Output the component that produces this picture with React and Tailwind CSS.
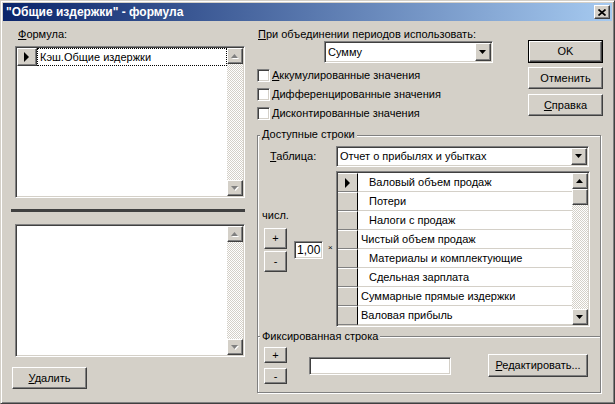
import React from "react";

const RAISED =
  "bg-[#d4d0c8] border border-t-white border-l-white border-r-[#404040] border-b-[#404040] shadow-[inset_-1px_-1px_#808080]";
const SUNKEN =
  "border border-t-[#808080] border-l-[#808080] border-r-white border-b-white shadow-[inset_1px_1px_#404040,inset_-1px_-1px_#d4d0c8]";
const CHECKER =
  "bg-[image:repeating-conic-gradient(#d4d0c8_0%_25%,#ffffff_0%_50%)] bg-[length:2px_2px]";

function Btn({ className = "", children }) {
  return (
    <div className={`flex items-center justify-center shrink-0 ${RAISED} ${className}`}>
      {children}
    </div>
  );
}

function Tri({ dir = "up", disabled = false }) {
  const pts = dir === "up" ? "3.5,0 7,4 0,4" : "0,0 7,0 3.5,4";
  return (
    <svg width="8" height="5" viewBox="0 0 8 5">
      {disabled && <polygon points={pts} fill="#ffffff" transform="translate(1,1)" />}
      <polygon points={pts} fill={disabled ? "#808080" : "#000000"} />
    </svg>
  );
}

function RightTri() {
  return (
    <svg width="6" height="10" viewBox="0 0 6 10">
      <polygon points="0,0 5,5 0,10" fill="#000" />
    </svg>
  );
}

function VScroll({ disabled = false, thumb = false }) {
  return (
    <div className="flex flex-col w-[16px] h-full shrink-0">
      <Btn className="w-[16px] h-[16px]">
        <Tri dir="up" disabled={disabled} />
      </Btn>
      {thumb && <Btn className="w-[16px] h-[16px]" />}
      <div className={`flex-1 ${CHECKER}`} />
      <Btn className="w-[16px] h-[16px]">
        <Tri dir="down" disabled={disabled} />
      </Btn>
    </div>
  );
}

function Combo({ className = "", text }) {
  return (
    <div className={`flex bg-white p-px ${SUNKEN} ${className}`}>
      <div className="flex-1 flex items-center pl-[2px]">{text}</div>
      <Btn className="w-[16px] h-full">
        <Tri dir="down" />
      </Btn>
    </div>
  );
}

function Check({ children }) {
  return (
    <div className="h-[19px] flex items-center">
      <div className={`w-[13px] h-[13px] bg-white ${SUNKEN}`} />
      <div className="ml-[2px]">{children}</div>
    </div>
  );
}

const ROWS = [
  { t: "Валовый объем продаж", ind: true, sel: true },
  { t: "Потери", ind: true },
  { t: "Налоги с продаж", ind: true },
  { t: "Чистый объем продаж" },
  { t: "Материалы и комплектующие", ind: true },
  { t: "Сдельная зарплата", ind: true },
  { t: "Суммарные прямые издержки" },
  { t: "Валовая прибыль" },
];

export default function App() {
  return (
    <div className="w-[615px] h-[404px] bg-[#d4d0c8] border border-t-[#d4d0c8] border-l-[#d4d0c8] border-r-[#404040] border-b-[#404040] shadow-[inset_1px_1px_white,inset_-1px_-1px_#808080] p-[2px] flex flex-col overflow-hidden text-[11px] leading-[13px] text-black font-['Liberation_Sans',Arial,sans-serif]">
      {/* Title bar */}
      <div className="h-[18px] shrink-0 flex items-center justify-between pl-[3px] pr-[2px] bg-[linear-gradient(to_right,#0a246a,#a6caf0)]">
        <div className="text-white font-bold text-[12px] leading-[14px]">
          {'"Общие издержки" - формула'}
        </div>
        <Btn className="w-[16px] h-[14px]">
          <svg width="8" height="7" viewBox="0 0 8 7">
            <path d="M0.5 0.5 L7.5 6.5 M7.5 0.5 L0.5 6.5" stroke="#000" strokeWidth="1.7" />
          </svg>
        </Btn>
      </div>

      <div className="flex flex-1">
        {/* Left column */}
        <div className="ml-[8px] w-[234px] flex flex-col">
          <div className="mt-[7px] pl-[7px] h-[13px]">
            <span className="underline">Ф</span>ормула:
          </div>
          <div className={`mt-[5px] ml-[4px] w-[230px] h-[152px] bg-white p-px flex ${SUNKEN}`}>
            <div className="flex-1 flex flex-col">
              <div className="flex h-[18px]">
                <div className={`w-[20px] h-[18px] flex items-center justify-center ${RAISED}`}>
                  <RightTri />
                </div>
                <div className="flex-1 border border-dotted border-black flex items-center pl-[2px]">
                  Кэш.Общие издержки
                </div>
              </div>
            </div>
            <VScroll disabled />
          </div>
          <div className="mt-[11px] h-[3px] bg-[#404040]" />
          <div className={`mt-[12px] ml-[4px] w-[230px] h-[133px] bg-white p-px flex ${SUNKEN}`}>
            <div className="flex-1" />
            <VScroll disabled />
          </div>
          <Btn className="mt-[10px] ml-[1px] w-[75px] h-[22px]">
            <span>
              <span className="underline">У</span>далить
            </span>
          </Btn>
        </div>

        {/* Right column */}
        <div className="ml-[12px] w-[346px] flex flex-col">
          <div className="flex h-[114px] shrink-0">
            <div className="w-[271px] flex flex-col">
              <div className="mt-[7px] pl-[1px] h-[13px]">
                <span className="underline">П</span>ри объединении периодов использовать:
              </div>
              <Combo className="ml-[67px] w-[169px] h-[22px]" text="Сумму" />
              <div className="mt-[3px] flex flex-col">
                <Check>
                  <span className="underline">А</span>ккумулированные значения
                </Check>
                <Check>
                  <span className="underline">Д</span>ифференцированные значения
                </Check>
                <Check>
                  <span className="underline">Д</span>исконтированные значения
                </Check>
              </div>
            </div>
            <div className="w-[75px] flex flex-col pt-[19px]">
              <div className="border border-black">
                <Btn className="w-[73px] h-[21px]">OK</Btn>
              </div>
              <Btn className="mt-[4px] w-[75px] h-[22px]">Отменить</Btn>
              <Btn className="mt-[5px] w-[75px] h-[22px]">
                <span>
                  <span className="underline">С</span>правка
                </span>
              </Btn>
            </div>
          </div>

          {/* Group box */}
          <div className="relative w-[344px] h-[258px] border border-[#808080] shadow-[inset_1px_1px_white,1px_1px_white] flex flex-col">
            <div className="absolute left-[2px] top-[-8px] px-[2px] bg-[#d4d0c8]">Доступные строки</div>

            <div className="mt-[10px] h-[21px] flex items-center">
              <div className="w-[78px] pl-[12px]">
                <span className="underline">Т</span>аблица:
              </div>
              <Combo className="w-[253px] h-[21px]" text="Отчет о прибылях и убытках" />
            </div>

            <div className="mt-[4px] h-[156px] flex">
              <div className="w-[78px] flex flex-col">
                <div className="mt-[38px] pl-[4px] h-[13px]">числ.</div>
                <div className="mt-[6px] pl-[6px] flex items-center">
                  <div className="flex flex-col">
                    <Btn className="w-[23px] h-[21px]">+</Btn>
                    <Btn className="mt-[2px] w-[23px] h-[21px]">-</Btn>
                  </div>
                  <div className={`ml-[7px] w-[29px] h-[18px] bg-white flex items-center pl-[2px] text-[12px] ${SUNKEN}`}>
                    1,00
                  </div>
                  <div className="ml-[5px] -mt-[5px] text-[8px] leading-[8px]">×</div>
                </div>
              </div>
              <div className={`w-[254px] h-[156px] bg-white p-px flex ${SUNKEN}`}>
                <div className="flex-1 flex flex-col">
                  {ROWS.map((r, i) => (
                    <div key={i} className="flex h-[19px]">
                      <div className="w-[20px] h-[19px] bg-[#d4d0c8] border-r border-r-black border-b border-b-[#808080] border-t border-t-white flex items-center justify-center">
                        {r.sel && <RightTri />}
                      </div>
                      <div
                        className={
                          "flex-1 flex items-center border-b border-b-[#d4d0c8] " +
                          (r.ind ? "pl-[11px]" : "pl-[3px]")
                        }
                      >
                        {r.t}
                      </div>
                    </div>
                  ))}
                </div>
                <VScroll thumb />
              </div>
            </div>

            <div className="relative mt-[9px] h-[2px] border-t border-t-[#808080] border-b border-b-white">
              <div className="absolute left-[2px] top-[-7px] px-[2px] bg-[#d4d0c8] leading-[13px]">
                Фиксированная строка
              </div>
            </div>

            <div className="mt-[9px] pl-[6px] flex items-center">
              <div className="flex flex-col">
                <Btn className="w-[23px] h-[16px]">+</Btn>
                <Btn className="mt-[5px] w-[23px] h-[16px]">-</Btn>
              </div>
              <div className={`ml-[22px] w-[142px] h-[18px] bg-white ${SUNKEN}`} />
              <Btn className="ml-[37px] w-[100px] h-[23px]">
                <span>
                  <span className="underline">Р</span>едактировать...
                </span>
              </Btn>
            </div>
          </div>
        </div>
      </div>
    </div>
  );
}
